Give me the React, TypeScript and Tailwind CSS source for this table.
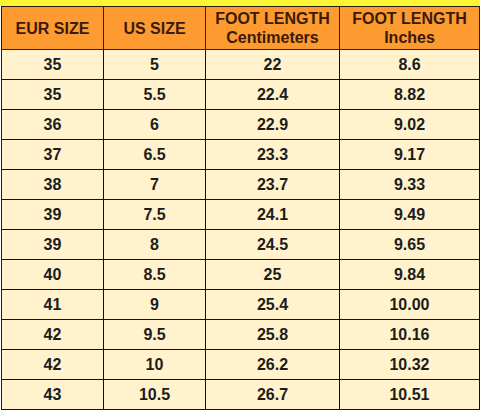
const rows: [string, string, string, string][] = [
  ['35', '5', '22', '8.6'],
  ['35', '5.5', '22.4', '8.82'],
  ['36', '6', '22.9', '9.02'],
  ['37', '6.5', '23.3', '9.17'],
  ['38', '7', '23.7', '9.33'],
  ['39', '7.5', '24.1', '9.49'],
  ['39', '8', '24.5', '9.65'],
  ['40', '8.5', '25', '9.84'],
  ['41', '9', '25.4', '10.00'],
  ['42', '9.5', '25.8', '10.16'],
  ['42', '10', '26.2', '10.32'],
  ['43', '10.5', '26.7', '10.51'],
];

const cols = ['w-[102px]', 'w-[102px]', 'w-[134px]', 'w-[140px]'];

export default function App() {
  return (
    <div
      className="w-[482px] h-[412px] bg-white"
      style={{ fontFamily: '"Liberation Sans", Arial, sans-serif' }}
    >
      {/* yellow strip above the table */}
      <div className="h-[6px] w-[480px] bg-[#fbf633]" />

      <div className="ml-[1px] w-[479px] border-l border-t border-[#2a1a0a] font-bold text-[16px]">
        {/* header */}
        <div className="flex h-[43px] bg-[#fd9a30] text-[#3a1a08] leading-[19px]">
          <div className={`${cols[0]} flex items-center justify-center border-r border-b border-[#3a200a]`}>
            EUR SIZE
          </div>
          <div className={`${cols[1]} flex items-center justify-center border-r border-b border-[#3a200a]`}>
            US SIZE
          </div>
          <div className={`${cols[2]} flex flex-col items-center justify-center border-r border-b border-[#3a200a]`}>
            <span>FOOT LENGTH</span>
            <span>Centimeters</span>
          </div>
          <div className={`${cols[3]} flex flex-col items-center justify-center border-r border-b border-[#3a200a]`}>
            <span>FOOT LENGTH</span>
            <span>Inches</span>
          </div>
        </div>

        {/* body */}
        {rows.map((r, i) => (
          <div key={i} className="flex h-[30px] bg-[#fff2cc] text-[#1c1c1c]">
            {r.map((v, j) => (
              <div
                key={j}
                className={`${cols[j]} flex items-center justify-center border-r border-b border-[#111]`}
              >
                {v}
              </div>
            ))}
          </div>
        ))}
      </div>
    </div>
  );
}
